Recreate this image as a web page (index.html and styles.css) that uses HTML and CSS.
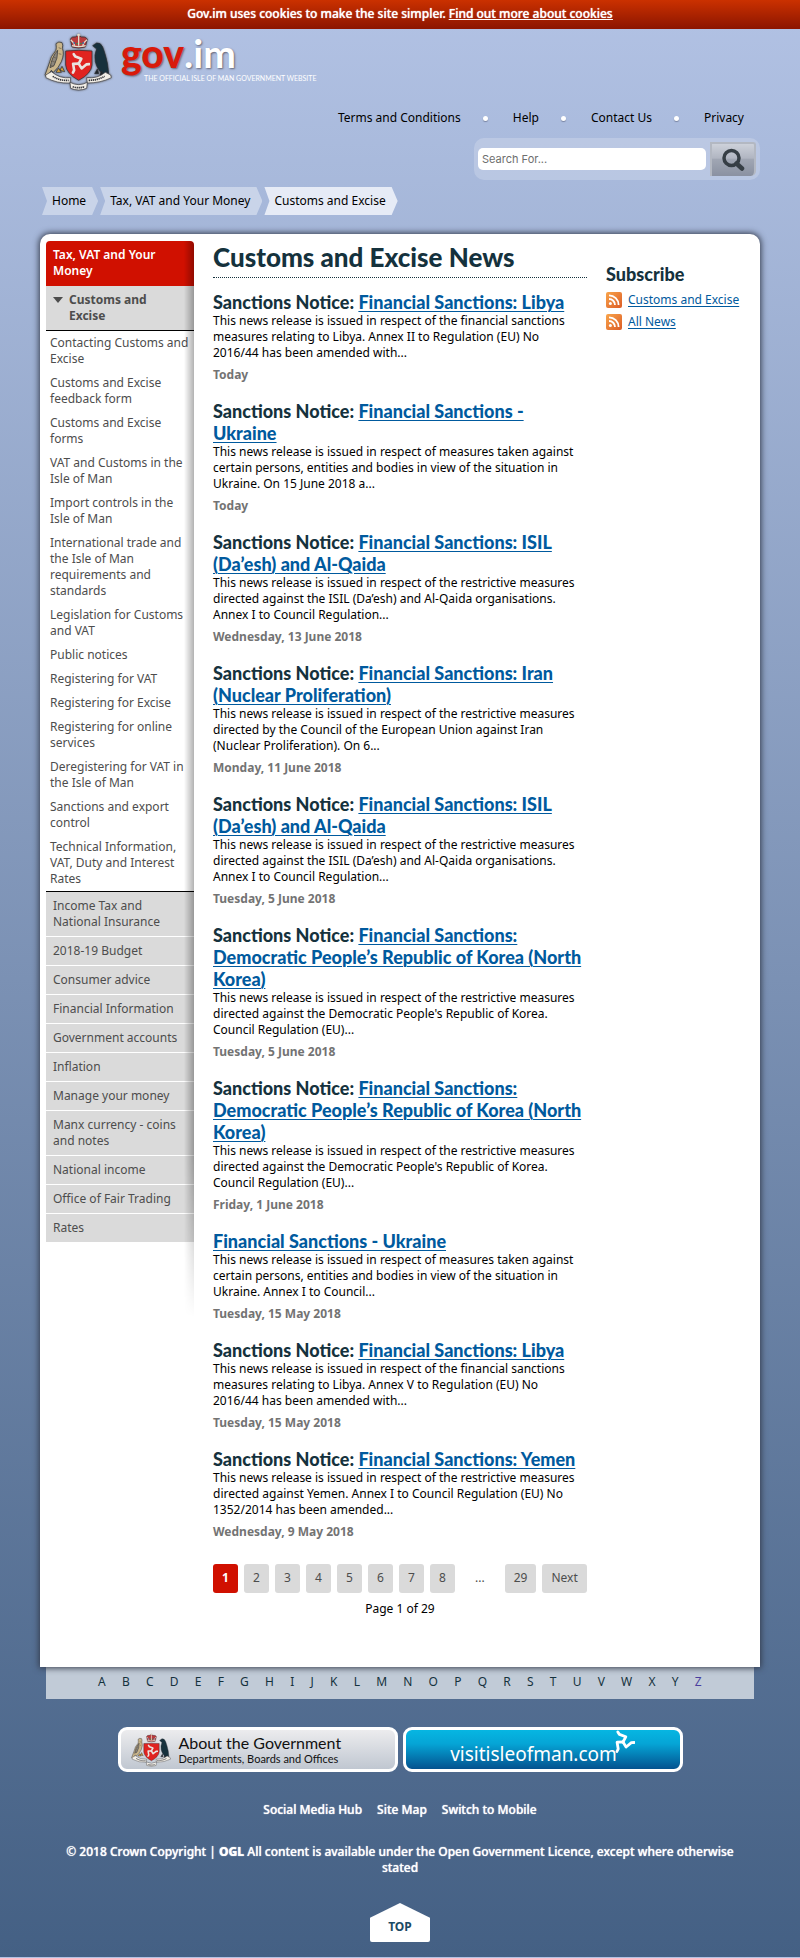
FILE: index.html
```html
<!DOCTYPE html>
<html lang="en">
<head>
<meta charset="utf-8">
<meta name="viewport" content="width=device-width, initial-scale=1">
<title>Customs and Excise News</title>
<link rel="stylesheet" href="styles.css">
</head>
<body id="top">
<svg class="defs" width="0" height="0" aria-hidden="true">
  <defs>
    <linearGradient id="rss-fill" x1="0" y1="0" x2="1" y2="1">
      <stop offset="0" stop-color="#f9a54b"/><stop offset="1" stop-color="#dc5c26"/>
    </linearGradient>
    <symbol id="triskelion" viewBox="-30 -30 60 60">
      <g fill="none" stroke="currentColor" stroke-width="7" stroke-linejoin="round" stroke-linecap="round">
        <path id="leg" d="M0 0 L7 -13 L-9 -19 L-13 -25"/>
        <use href="#leg" transform="rotate(120)"/>
        <use href="#leg" transform="rotate(240)"/>
      </g>
    </symbol>
    <symbol id="crest" viewBox="0 0 204 174">
      <g stroke="#2b2d33" stroke-width="2" stroke-linejoin="round">
        <path d="M36 32 Q44 24 54 29 Q58 36 55 46 Q62 62 52 86 Q44 104 28 118 L22 112 L8 132 L3 126 L14 96 Q20 68 36 52 Q38 44 36 32Z" fill="#c9b58a"/>
        <path d="M41 52 Q24 70 18 104 L30 98 Q42 76 41 52Z" fill="#8d877c"/>
        <path d="M36 118 l8 -12 l8 12z M48 112 l6 -12 l8 16z" fill="#d9a33a"/>
        <path d="M146 38 L158 30 Q170 28 176 42 Q180 52 184 66 Q192 90 194 124 L186 116 L180 126 Q160 112 154 86 Q150 66 158 48 Z" fill="#17313c"/>
        <path d="M160 108 l-8 14 h12z M172 114 l-4 12 h12z" fill="#20272b"/>
        <path d="M84 42 L79 18 Q84 10 94 12 L103 6 L112 12 Q124 10 130 18 L124 42 Q104 48 84 42Z" fill="#b93a3c"/>
        <path d="M65 54 Q104 50 144 54 V96 Q142 122 104 142 Q67 122 65 96Z" fill="#e02320"/>
      </g>
      <g fill="none" stroke="#e4dccb" stroke-width="4">
        <path d="M84 38 Q104 44 125 38 M80 20 Q90 28 92 38 M129 20 Q118 28 116 38 M104 12 V38"/>
        <path d="M104 2 V12 M99 6 H109"/>
      </g>
      <path d="M88 30 h5 M115 30 h5" stroke="#2e6ba4" stroke-width="5"/>
      <path d="M97 32 h5 M108 32 h5" stroke="#3c8b4d" stroke-width="4"/>
      <path d="M28 72 l10 4 M24 84 l10 4 M20 96 l8 4 M44 44 l8 3 M44 62 l8 2" stroke="#655a45" stroke-width="2"/>
      <use href="#triskelion" x="70" y="58" width="68" height="68" color="#e9e3df"/>
      <g fill="#f3efe7" stroke="#3a3a40" stroke-width="2" stroke-linejoin="round">
        <path d="M5 126 L22 116 Q48 138 80 134 L78 150 Q40 152 6 134Z"/>
        <path d="M200 126 L184 118 Q160 138 128 134 L130 150 Q170 150 202 134Z"/>
        <path d="M78 148 Q104 162 130 148 L128 166 Q104 176 80 166Z"/>
      </g>
      <path d="M26 130 Q48 144 74 142 M134 142 Q160 142 182 130 M86 161 Q104 167 122 161" fill="none" stroke="#33343a" stroke-width="5" stroke-dasharray="4 2"/>
    </symbol>
    <symbol id="rss" viewBox="0 0 16 16">
      <rect width="16" height="16" rx="2" fill="url(#rss-fill)"/>
      <circle cx="4.4" cy="11.6" r="1.5" fill="#fff"/>
      <path d="M3 7 a6 6 0 0 1 6 6 M3 3.4 a9.600 9.600 0 0 1 9.600 9.600" fill="none" stroke="#fff" stroke-width="1.800"/>
    </symbol>
  </defs>
</svg>

<div class="cookies">Gov.im uses cookies to make the site simpler. <a href="#">Find out more about cookies</a></div>

<header class="header">
  <a class="logo" href="#" aria-label="gov.im home">
    <svg class="logo-crest" aria-hidden="true"><use href="#crest"/></svg>
    <span class="logo-text">
      <span class="logo-name"><span class="logo-gov">gov</span>.im</span>
      <span class="logo-tag">THE OFFICIAL ISLE OF MAN GOVERNMENT WEBSITE</span>
    </span>
  </a>
  <nav aria-label="Help">
    <ul class="top-links">
      <li><a href="#">Terms and Conditions</a></li>
      <li><a href="#">Help</a></li>
      <li><a href="#">Contact Us</a></li>
      <li><a href="#">Privacy</a></li>
    </ul>
  </nav>
  <form class="search">
    <input class="search-box" type="search" placeholder="Search For..." aria-label="Search For">
    <button class="search-button" type="button" aria-label="Search">
      <svg width="24" height="24" viewBox="0 0 24 24" fill="none" stroke="#363e45" aria-hidden="true"><circle cx="10.500" cy="10" r="7.500" stroke-width="3.500"/><path d="M15.500 15.500 L21 20.500" stroke-width="4.500" stroke-linecap="round"/></svg>
    </button>
  </form>
  <nav aria-label="Breadcrumb">
    <ol class="crumbs">
      <li><a href="#">Home</a></li>
      <li><a href="#">Tax, VAT and Your Money</a></li>
      <li class="current"><a href="#">Customs and Excise</a></li>
    </ol>
  </nav>
</header>

<main class="panel">
  <nav class="side" aria-label="Section">
    <a class="side-title" href="#">Tax, VAT and Your Money</a>
    <a class="side-open" href="#">Customs and Excise</a>
    <ul class="side-sub">
      <li><a href="#">Contacting Customs and Excise</a></li>
      <li><a href="#">Customs and Excise feedback form</a></li>
      <li><a href="#">Customs and Excise forms</a></li>
      <li><a href="#">VAT and Customs in the Isle of Man</a></li>
      <li><a href="#">Import controls in the Isle of Man</a></li>
      <li><a href="#">International trade and the Isle of Man requirements and standards</a></li>
      <li><a href="#">Legislation for Customs and VAT</a></li>
      <li><a href="#">Public notices</a></li>
      <li><a href="#">Registering for VAT</a></li>
      <li><a href="#">Registering for Excise</a></li>
      <li><a href="#">Registering for online services</a></li>
      <li><a href="#">Deregistering for VAT in the Isle of Man</a></li>
      <li><a href="#">Sanctions and export control</a></li>
      <li><a href="#">Technical Information, VAT, Duty and Interest Rates</a></li>
    </ul>
    <ul class="side-list">
      <li><a href="#">Income Tax and National Insurance</a></li>
      <li><a href="#">2018-19 Budget</a></li>
      <li><a href="#">Consumer advice</a></li>
      <li><a href="#">Financial Information</a></li>
      <li><a href="#">Government accounts</a></li>
      <li><a href="#">Inflation</a></li>
      <li><a href="#">Manage your money</a></li>
      <li><a href="#">Manx currency - coins and notes</a></li>
      <li><a href="#">National income</a></li>
      <li><a href="#">Office of Fair Trading</a></li>
      <li><a href="#">Rates</a></li>
    </ul>
  </nav>

  <div class="content">
    <h1>Customs and Excise News</h1>
    <article>
      <h2>Sanctions Notice: <a href="#">Financial Sanctions: Libya</a></h2>
      <p>This news release is issued in respect of the financial sanctions measures relating to Libya. Annex II to Regulation (EU) No 2016/44 has been amended with...</p>
      <time>Today</time>
    </article>
    <article>
      <h2>Sanctions Notice: <a href="#">Financial Sanctions - Ukraine</a></h2>
      <p>This news release is issued in respect of measures taken against certain persons, entities and bodies in view of the situation in Ukraine. On 15 June 2018 a...</p>
      <time>Today</time>
    </article>
    <article>
      <h2>Sanctions Notice: <a href="#">Financial Sanctions: ISIL (Da’esh) and Al-Qaida</a></h2>
      <p>This news release is issued in respect of the restrictive measures directed against the ISIL (Da’esh) and Al-Qaida organisations. Annex I to Council Regulation...</p>
      <time>Wednesday, 13 June 2018</time>
    </article>
    <article>
      <h2>Sanctions Notice: <a href="#">Financial Sanctions: Iran (Nuclear Proliferation)</a></h2>
      <p>This news release is issued in respect of the restrictive measures directed by the Council of the European Union against Iran (Nuclear Proliferation). On 6...</p>
      <time>Monday, 11 June 2018</time>
    </article>
    <article>
      <h2>Sanctions Notice: <a href="#">Financial Sanctions: ISIL (Da’esh) and Al-Qaida</a></h2>
      <p>This news release is issued in respect of the restrictive measures directed against the ISIL (Da’esh) and Al-Qaida organisations. Annex I to Council Regulation...</p>
      <time>Tuesday, 5 June 2018</time>
    </article>
    <article>
      <h2>Sanctions Notice: <a href="#">Financial Sanctions: Democratic People’s Republic of Korea (North Korea)</a></h2>
      <p>This news release is issued in respect of the restrictive measures directed against the Democratic People's Republic of Korea. Council Regulation (EU)...</p>
      <time>Tuesday, 5 June 2018</time>
    </article>
    <article>
      <h2>Sanctions Notice: <a href="#">Financial Sanctions: Democratic People’s Republic of Korea (North Korea)</a></h2>
      <p>This news release is issued in respect of the restrictive measures directed against the Democratic People's Republic of Korea. Council Regulation (EU)...</p>
      <time>Friday, 1 June 2018</time>
    </article>
    <article>
      <h2><a href="#">Financial Sanctions - Ukraine</a></h2>
      <p>This news release is issued in respect of measures taken against certain persons, entities and bodies in view of the situation in Ukraine. Annex I to Council...</p>
      <time>Tuesday, 15 May 2018</time>
    </article>
    <article>
      <h2>Sanctions Notice: <a href="#">Financial Sanctions: Libya</a></h2>
      <p>This news release is issued in respect of the financial sanctions measures relating to Libya. Annex V to Regulation (EU) No 2016/44 has been amended with...</p>
      <time>Tuesday, 15 May 2018</time>
    </article>
    <article>
      <h2>Sanctions Notice: <a href="#">Financial Sanctions: Yemen</a></h2>
      <p>This news release is issued in respect of the restrictive measures directed against Yemen. Annex I to Council Regulation (EU) No 1352/2014 has been amended...</p>
      <time>Wednesday, 9 May 2018</time>
    </article>
    <nav class="pages" aria-label="Pages">
      <a class="on" href="#">1</a>
      <a href="#">2</a>
      <a href="#">3</a>
      <a href="#">4</a>
      <a href="#">5</a>
      <a href="#">6</a>
      <a href="#">7</a>
      <a href="#">8</a>
      <span class="more">...</span>
      <a href="#">29</a>
      <a href="#">Next</a>
    </nav>
    <p class="page-count">Page 1 of 29</p>
  </div>

  <aside class="subscribe">
    <h2>Subscribe</h2>
    <ul>
      <li><svg width="16" height="16" aria-hidden="true"><use href="#rss"/></svg><a href="#">Customs and Excise</a></li>
      <li><svg width="16" height="16" aria-hidden="true"><use href="#rss"/></svg><a href="#">All News</a></li>
    </ul>
  </aside>
</main>

<footer class="footer">
  <nav class="az" aria-label="A to Z">
    <a href="#">A</a><a href="#">B</a><a href="#">C</a><a href="#">D</a><a href="#">E</a><a href="#">F</a><a href="#">G</a><a href="#">H</a><a href="#">I</a><a href="#">J</a><a href="#">K</a><a href="#">L</a><a href="#">M</a><a href="#">N</a><a href="#">O</a><a href="#">P</a><a href="#">Q</a><a href="#">R</a><a href="#">S</a><a href="#">T</a><a href="#">U</a><a href="#">V</a><a href="#">W</a><a href="#">X</a><a href="#">Y</a><a class="last" href="#">Z</a>
  </nav>
  <div class="banners">
    <a class="banner about" href="#">
      <svg width="40" height="34" aria-hidden="true"><use href="#crest"/></svg>
      <span><span class="about-title">About the Government</span><span class="about-sub">Departments, Boards and Offices</span></span>
    </a>
    <a class="banner visit" href="#">
      <span>visitisleofman.com</span>
      <svg class="visit-mark" width="24" height="24" aria-hidden="true"><use href="#triskelion"/></svg>
    </a>
  </div>
  <nav class="foot-links" aria-label="Footer">
    <a href="#">Social Media Hub</a>
    <a href="#">Site Map</a>
    <a href="#">Switch to Mobile</a>
  </nav>
  <p class="legal">© 2018 Crown Copyright | <a class="ogl" href="#">OGL</a> All content is available under the <a href="#">Open Government Licence,</a> except where otherwise stated</p>
  <a class="to-top" href="#top">TOP</a>
</footer>
</body>
</html>
```

FILE: styles.css
```css
* { box-sizing: border-box; }

body {
  margin: 0;
  background: linear-gradient(#b2c2e4, #446084);
  color: #000;
  font: 12px/16px "Noto Sans", "Open Sans", sans-serif;
}

a { color: inherit; text-decoration: none; }
ul, ol { list-style: none; margin: 0; padding: 0; }
h1, h2, p { margin: 0; }
.defs { position: absolute; }

.cookies {
  padding: 6px 16px 7px;
  background: linear-gradient(#cb3100, #8c1500);
  color: #fff;
  font-weight: 500;
  text-align: center;
  text-shadow: 0 0 1px #fff;
}
.cookies a { text-decoration: underline; }

.header { padding: 4px 40px 19px; }

.logo { display: flex; gap: 9px; padding-left: 4px; height: 58px; width: max-content; }
.logo-crest { width: 68px; height: 58px; filter: drop-shadow(0 0 1px #555); }
.logo-text { display: flex; flex-direction: column; }
.logo-name {
  color: #fff;
  font: 700 39px/40px Lato, sans-serif;
  text-shadow: 1px 1px 2px #667;
}
.logo-gov { color: #d81a0b; font-weight: 900; }
.logo-tag { padding-left: 23px; color: #fff; font: 7px/10px Lato, sans-serif; }

.top-links { display: flex; justify-content: flex-end; gap: 22px; padding: 19px 16px 12px 0; }
.top-links li { display: flex; align-items: center; }
.top-links li + li::before {
  content: "";
  width: 5px;
  height: 5px;
  margin-right: 25px;
  border-radius: 50%;
  background: #fff;
  box-shadow: 0 1px 1px #7783a0;
}

.search {
  display: flex;
  align-items: center;
  gap: 4px;
  width: 286px;
  height: 42px;
  margin-left: auto;
  padding: 4px;
  border-radius: 10px;
  background: rgba(255, 255, 255, .2);
}
.search-box {
  flex: 1;
  min-width: 0;
  height: 22px;
  padding: 0 4px;
  border: 0;
  border-radius: 5px;
  background: #fff;
  font: 11px/16px Inter, sans-serif;
}
.search-box::placeholder { color: #6e6e6e; }
.search-button {
  display: grid;
  place-items: center;
  width: 46px;
  height: 34px;
  padding: 0;
  border: 2px solid #b3b8c2;
  border-width: 2px 2px 0;
  border-radius: 0 3px 5px 0;
  background: linear-gradient(#cdd1da, #b0b5c1 45%, #a1a7b4 46%, #8a91a1);
}

.crumbs { display: flex; gap: 2px; padding: 7px 0 0 2px; }
.crumbs li {
  padding: 6px 12px 6px 10px;
  background: #c9d4e9;
  clip-path: polygon(0 0, calc(100% - 6px) 0, 100% 50%, calc(100% - 6px) 100%, 0 100%, 5px 50%);
}
.crumbs .current { background: #e6ebf6; }

.panel {
  position: relative;
  display: grid;
  grid-template-columns: 148px minmax(0, 1fr) 148px;
  column-gap: 19px;
  align-items: start;
  margin: 0 40px;
  padding: 7px 6px 50px;
  border-radius: 10px 10px 0 0;
  background: #fff;
  box-shadow: 0 0 6px 1px #333a4a;
}

.side { position: relative; color: #4d4d4d; }
.side::after {
  content: "";
  position: absolute;
  top: 0;
  right: 0;
  bottom: -75px;
  width: 10px;
  border-radius: 0 4px 0 0;
  background: linear-gradient(90deg, transparent, rgba(0, 0, 0, .3));
  mask-image: linear-gradient(#000 85%, transparent);
  pointer-events: none;
}
.side a { display: block; }
.side-title {
  padding: 6px 20px 7px 7px;
  border-radius: 4px 4px 0 0;
  background: #d01000;
  color: #fff;
  font-weight: 600;
}
.side-open {
  position: relative;
  padding: 6px 24px 6px 23px;
  border-bottom: 1px solid #000;
  background: #dadada;
  font-weight: 700;
}
.side-open::before {
  content: "";
  position: absolute;
  top: 11px;
  left: 7px;
  border: 5px solid transparent;
  border-top: 6px solid #4d4d4d;
  border-bottom: 0;
}
.side-sub { border-bottom: 1px solid #000; }
.side-sub a { padding: 4px 0 4px 4px; }
.side-list a { padding: 6px 12px 6px 7px; background: #dadada; }
.side-list li + li { border-top: 1px solid #fff; }

h1, h2 { color: #15323d; font-family: Lato, sans-serif; font-weight: 900; }
h1 { margin-bottom: 13px; padding-bottom: 4px; border-bottom: 1px dotted #15323d; font-size: 26px; line-height: 32px; }
h2 { font-size: 18px; line-height: 22px; }
h2 a { color: #005a9e; text-decoration: underline; text-decoration-thickness: 1px; text-underline-offset: 2px; }
article { margin-bottom: 17px; }
article p { padding-right: 4px; }
time { display: block; margin-top: 6px; color: #737373; font-weight: 700; }

.pages { display: flex; gap: 6px; padding-top: 7px; color: #4d4d4d; }
.pages a, .more { min-width: 25px; padding: 6px 9px 7px; border-radius: 3px; text-align: center; }
.pages a { background: #dadada; }
.pages .on { background: #d01000; color: #fff; font-weight: 700; }
.pages .more { padding: 6px 14px 7px; }
.page-count { margin-top: 8px; text-align: center; }

.subscribe { padding-top: 22px; }
.subscribe ul { display: grid; gap: 6px; margin-top: 7px; }
.subscribe li { display: flex; gap: 6px; }
.subscribe a { color: #005a9e; text-decoration: underline; text-underline-offset: 2px; }

.footer { padding-bottom: 15px; color: #fff; font-weight: 500; text-align: center; }
.az {
  display: flex;
  justify-content: space-between;
  margin: 0 46px;
  padding: 7px 52px 9px;
  background: #c1cbd7;
  color: #15323d;
  font-weight: 400;
}
.az .last { color: #4a3f9f; }

.banners { display: flex; flex-wrap: wrap; justify-content: center; gap: 5px; margin-top: 28px; }
.banner {
  display: flex;
  align-items: center;
  width: 280px;
  height: 45px;
  border: 3px solid #fff;
  border-radius: 9px;
  font-weight: 400;
}
.about {
  gap: 8px;
  padding-left: 10px;
  background: linear-gradient(#ececee, #c0c7d1);
  color: #111;
  text-align: left;
  font-family: Lato, sans-serif;
}
.about-title, .about-sub { display: block; }
.about-title { font-size: 16px; line-height: 18px; }
.about-sub { font-size: 11px; line-height: 14px; }
.visit {
  justify-content: center;
  background: linear-gradient(#06b6e2, #05a5d6 35%, #04528f);
  font-size: 19px;
}
.visit span { padding-top: 8px; }
.visit-mark { align-self: flex-start; margin-left: -6px; }

.foot-links { display: flex; justify-content: center; gap: 15px; margin-top: 30px; text-shadow: 0 0 1px #fff; }
.legal { margin-top: 26px; padding: 0 64px; text-shadow: 0 0 1px #fff; }
.ogl { font-weight: 800; }
.to-top {
  display: block;
  width: 60px;
  margin: 27px auto 0;
  padding: 16px 0 7px;
  border-radius: 0 0 2px 2px;
  background: #fff;
  clip-path: polygon(50% 0, 100% 38%, 100% 100%, 0 100%, 0 38%);
  color: #1b4a63;
  font-weight: 700;
}
```
